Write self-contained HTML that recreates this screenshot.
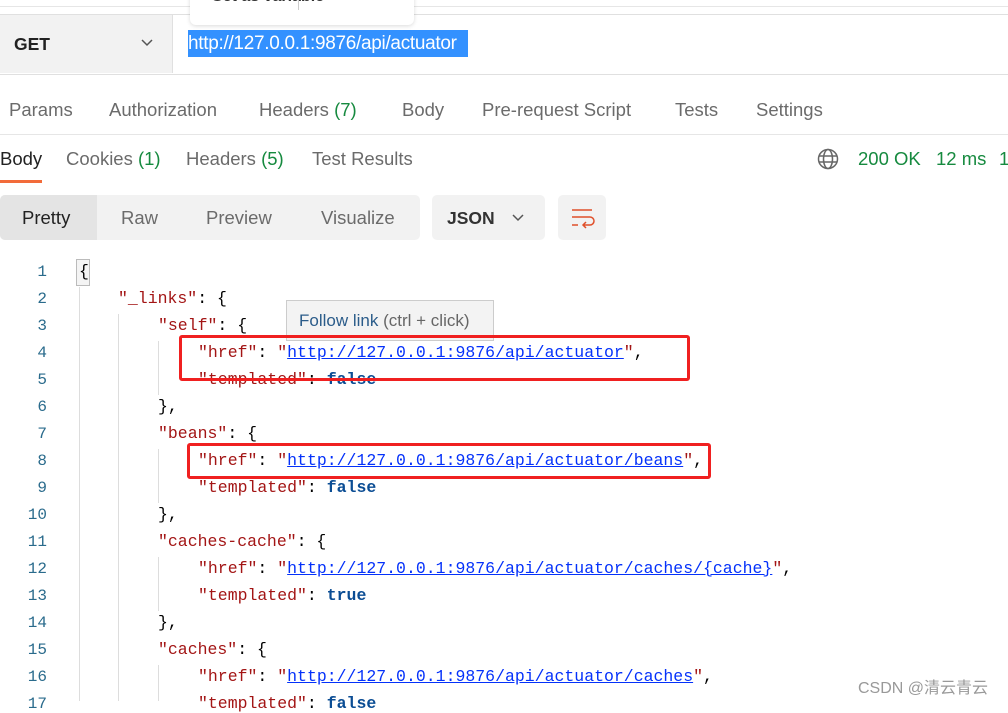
<!DOCTYPE html><html><head><style>
body{margin:0;width:1008px;height:701px;overflow:hidden;background:#fff;font-family:"Liberation Sans",sans-serif;position:relative}
.a{position:absolute;white-space:nowrap}
.ui{font-size:18.5px;color:#6b6b6b}
.g{color:#168a3f}
.code{font-family:"Liberation Mono",monospace;font-size:16.5px}
.ln{position:absolute;left:0;width:47px;text-align:right;color:#2a6b8c;font-family:"Liberation Mono",monospace;font-size:16px}
.k{color:#a31515}.s{color:#0431fa;text-decoration:underline;text-decoration-color:#0431fa}.b{color:#0b4d94;font-weight:bold}
.guide{position:absolute;width:1px;background:#ddd}
</style></head><body>
<div class="a" style="left:0;top:6px;width:1008px;height:1px;background:#e6e6e6"></div>
<div class="a" style="left:0;top:14px;width:1008px;height:59px;border-top:1px solid #e0e0e0;border-bottom:1px solid #e0e0e0;background:#fff"></div>
<div class="a" style="left:0;top:15px;width:172px;height:58px;background:#f2f2f2;border-right:1px solid #e0e0e0"></div>
<div class="a" style="left:14px;top:34px;font-size:17.5px;font-weight:bold;color:#222">GET</div>
<svg class="a" style="left:140px;top:38px" width="14" height="10"><path d="M2 2l5 5 5-5" fill="none" stroke="#555" stroke-width="1.5"/></svg>
<div class="a" style="left:188px;top:30px;height:27px;width:280px;background:#3391ff"></div>
<div class="a" style="left:188px;top:33px;font-size:19px;letter-spacing:-0.3px;color:#fff">http://127.0.0.1:9876/api/actuator</div>
<div class="a" style="left:190px;top:-10px;width:224px;height:35px;background:#fff;border-radius:6px;box-shadow:0 1px 4px rgba(0,0,0,.15)"></div>
<div class="a" style="left:212px;top:-12px;font-size:16px;font-weight:bold;color:#333">Set as variable</div>
<div class="a" style="left:298px;top:0;width:1px;height:10px;background:#ccc"></div>
<div class="a ui" style="left:9px;top:99px">Params</div>
<div class="a ui" style="left:109px;top:99px">Authorization</div>
<div class="a ui" style="left:259px;top:99px">Headers <span class="g">(7)</span></div>
<div class="a ui" style="left:402px;top:99px">Body</div>
<div class="a ui" style="left:482px;top:99px">Pre-request Script</div>
<div class="a ui" style="left:675px;top:99px">Tests</div>
<div class="a ui" style="left:756px;top:99px">Settings</div>
<div class="a" style="left:0;top:134px;width:1008px;height:1px;background:#e6e6e6"></div>
<div class="a ui" style="left:0;top:148px;color:#222">Body</div>
<div class="a" style="left:0;top:180px;width:42px;height:3px;background:#f26b3a"></div>
<div class="a ui" style="left:66px;top:148px">Cookies <span class="g">(1)</span></div>
<div class="a ui" style="left:186px;top:148px">Headers <span class="g">(5)</span></div>
<div class="a ui" style="left:312px;top:148px">Test Results</div>
<svg class="a" style="left:817px;top:148px" width="22" height="22" fill="none" stroke="#666" stroke-width="1.5"><circle cx="11" cy="11" r="9.5"/><ellipse cx="11" cy="11" rx="4.5" ry="9.5"/><path d="M1.5 8h19M1.5 14h19"/></svg>
<div class="a ui g" style="left:858px;top:148px">200 OK</div>
<div class="a ui g" style="left:936px;top:148px">12 ms</div>
<div class="a ui g" style="left:999px;top:148px">1</div>
<div class="a" style="left:0;top:195px;width:420px;height:45px;background:#f2f2f2;border-radius:5px"></div>
<div class="a" style="left:0;top:195px;width:97px;height:45px;background:#e4e4e4;border-radius:5px 0 0 5px"></div>
<div class="a ui" style="left:22px;top:207px;color:#222">Pretty</div>
<div class="a ui" style="left:121px;top:207px">Raw</div>
<div class="a ui" style="left:206px;top:207px">Preview</div>
<div class="a ui" style="left:321px;top:207px">Visualize</div>
<div class="a" style="left:432px;top:195px;width:113px;height:45px;background:#f2f2f2;border-radius:5px"></div>
<div class="a" style="left:447px;top:208px;font-size:17.5px;font-weight:bold;color:#333">JSON</div>
<svg class="a" style="left:511px;top:213px" width="14" height="10"><path d="M2 2l5 5 5-5" fill="none" stroke="#555" stroke-width="1.5"/></svg>
<div class="a" style="left:558px;top:195px;width:48px;height:45px;background:#f2f2f2;border-radius:5px"></div>
<svg class="a" style="left:570px;top:207px" width="26" height="24" fill="none" stroke="#e0502b" stroke-width="1.5"><path d="M2 3h20M2 10h18a4 4 0 0 1 0 8h-6M16 15l-3 3 3 3M2 18h6"/></svg>
<div class="guide" style="left:79px;top:287px;height:414px"></div>
<div class="guide" style="left:118px;top:314px;height:387px"></div>
<div class="guide" style="left:158px;top:341px;height:54px"></div>
<div class="guide" style="left:158px;top:449px;height:54px"></div>
<div class="guide" style="left:158px;top:557px;height:54px"></div>
<div class="guide" style="left:158px;top:665px;height:36px"></div>
<div class="a" style="left:76px;top:259px;width:12px;height:25px;border:1px solid #bbb;background:#f4f4f4"></div>
<div class="code">
<div class="ln" style="top:263px">1</div><div class="a" style="left:79px;top:262px">{</div>
<div class="ln" style="top:290px">2</div><div class="a" style="left:118px;top:289px"><span class="k">"_links"</span>: {</div>
<div class="ln" style="top:317px">3</div><div class="a" style="left:158px;top:316px"><span class="k">"self"</span>: {</div>
<div class="ln" style="top:344px">4</div><div class="a" style="left:198px;top:343px"><span class="k">"href"</span>: <span class="k">"</span><span class="s">http://127.0.0.1:9876/api/actuator</span><span class="k">"</span>,</div>
<div class="ln" style="top:371px">5</div><div class="a" style="left:198px;top:370px"><span class="k">"templated"</span>: <span class="b">false</span></div>
<div class="ln" style="top:398px">6</div><div class="a" style="left:158px;top:397px">},</div>
<div class="ln" style="top:425px">7</div><div class="a" style="left:158px;top:424px"><span class="k">"beans"</span>: {</div>
<div class="ln" style="top:452px">8</div><div class="a" style="left:198px;top:451px"><span class="k">"href"</span>: <span class="k">"</span><span class="s">http://127.0.0.1:9876/api/actuator/beans</span><span class="k">"</span>,</div>
<div class="ln" style="top:479px">9</div><div class="a" style="left:198px;top:478px"><span class="k">"templated"</span>: <span class="b">false</span></div>
<div class="ln" style="top:506px">10</div><div class="a" style="left:158px;top:505px">},</div>
<div class="ln" style="top:533px">11</div><div class="a" style="left:158px;top:532px"><span class="k">"caches-cache"</span>: {</div>
<div class="ln" style="top:560px">12</div><div class="a" style="left:198px;top:559px"><span class="k">"href"</span>: <span class="k">"</span><span class="s">http://127.0.0.1:9876/api/actuator/caches/{cache}</span><span class="k">"</span>,</div>
<div class="ln" style="top:587px">13</div><div class="a" style="left:198px;top:586px"><span class="k">"templated"</span>: <span class="b">true</span></div>
<div class="ln" style="top:614px">14</div><div class="a" style="left:158px;top:613px">},</div>
<div class="ln" style="top:641px">15</div><div class="a" style="left:158px;top:640px"><span class="k">"caches"</span>: {</div>
<div class="ln" style="top:668px">16</div><div class="a" style="left:198px;top:667px"><span class="k">"href"</span>: <span class="k">"</span><span class="s">http://127.0.0.1:9876/api/actuator/caches</span><span class="k">"</span>,</div>
<div class="ln" style="top:695px">17</div><div class="a" style="left:198px;top:694px"><span class="k">"templated"</span>: <span class="b">false</span></div>
</div>
<div class="a" style="left:286px;top:300px;width:206px;height:39px;background:#f3f3f3;border:1px solid #ccc"></div>
<div class="a" style="left:299px;top:311px;font-size:17px;color:#2b5c8a">Follow link <span style="color:#666">(ctrl + click)</span></div>
<div class="a" style="left:179px;top:335px;width:505px;height:40px;border:3.5px solid #f02020;border-radius:3px"></div>
<div class="a" style="left:187px;top:443px;width:518px;height:30px;border:3.5px solid #f02020;border-radius:3px"></div>
<div class="a" style="left:858px;top:674px;font-size:16px;color:#999;font-family:'Liberation Sans','Noto Sans CJK SC',sans-serif">CSDN @清云青云</div>
</body></html>
